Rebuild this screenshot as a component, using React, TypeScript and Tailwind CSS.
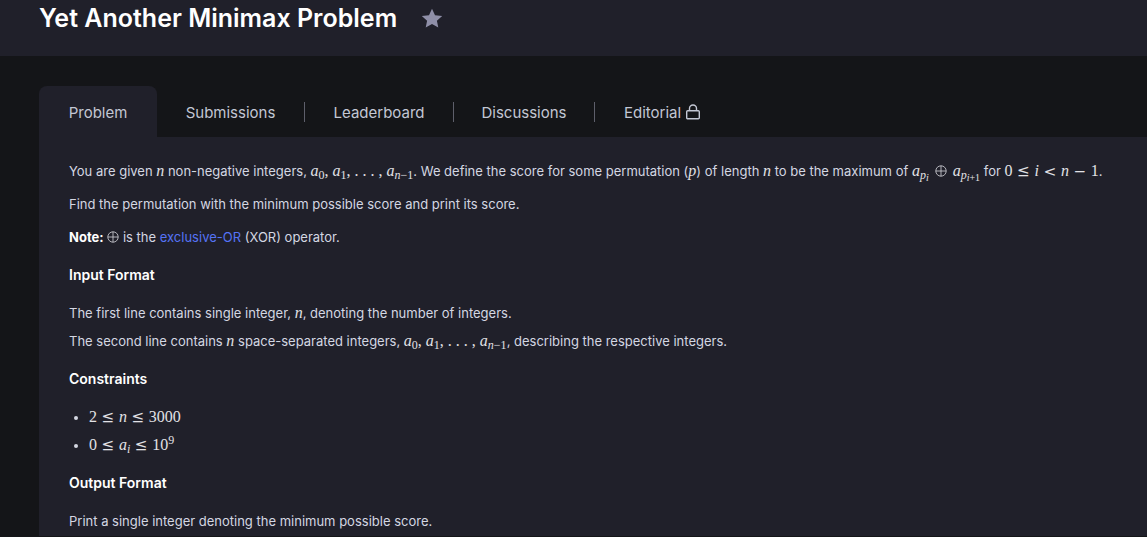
import type { ReactNode } from "react";

function M({ children }: { children: ReactNode }) {
  return (
    <span className="whitespace-nowrap font-['Liberation_Serif',serif] text-[16px] leading-none text-[#e2e2e6]">
      {children}
    </span>
  );
}

function Sub({ children }: { children: ReactNode }) {
  return <sub className="bottom-[-3px] text-[12px] leading-none">{children}</sub>;
}

function Rel({ children }: { children: ReactNode }) {
  return <span className="mx-[5px] font-['DejaVu_Math_TeX_Gyre','DejaVu_Serif',serif] text-[15px]">{children}</span>;
}

function Oplus() {
  return (
    <svg role="img" aria-label="xor" viewBox="0 0 12 12" className="inline-block size-3 align-[-1px]" fill="none" stroke="#d6d6dc" strokeWidth="0.8">
      <circle cx="6" cy="6" r="5.2" />
      <path d="M6 0.8v10.4M0.8 6h10.4" />
    </svg>
  );
}

function Sequence() {
  return (
    <M>
      <i>a</i><Sub>0</Sub>
      <span className="mr-1">,</span>
      <i>a</i><Sub>1</Sub>
      <span className="mr-1">,</span>
      <span className="mr-1">.</span>
      <span className="mr-1">.</span>
      <span className="mr-1">.</span>
      <span className="mr-1">,</span>
      <i>a</i><Sub><i>n</i>−1</Sub>
    </M>
  );
}

function Heading({ children }: { children: ReactNode }) {
  return <h2 className="my-[10px] text-[14px] leading-7 font-semibold text-white">{children}</h2>;
}

const tabs = [
  { label: "Submissions", width: "w-[148px]" },
  { label: "Leaderboard", width: "w-[149px]" },
  { label: "Discussions", width: "w-[141px]" },
];

export default function App() {
  return (
    <div className="min-h-screen bg-[#141518] font-['Inter','Liberation_Sans',sans-serif]">
      <header className="flex h-14 items-start gap-6 bg-[#20202a] px-[39px]">
        <h1 className="text-[25px] leading-9 font-semibold text-white">Yet Another Minimax Problem</h1>
        <button type="button" aria-label="Bookmark" className="mt-2">
          <svg viewBox="0 0 22 20" className="h-5 w-[22px]" fill="#8f8fa8">
            <path d="M11 0.8 14 7.2 21.2 8 15.9 12.7 17.3 19.4 11 16.1 4.7 19.4 6.1 12.7 0.8 8 8 7.2Z" />
          </svg>
        </button>
      </header>

      <main className="pt-[30px] pl-[39px]">
        <nav className="flex h-[51px] items-center text-[15px] leading-5 text-[#c3c7d4]">
          <a href="#problem" aria-current="page" className="flex h-full w-[118px] items-center justify-center rounded-t-lg bg-[#20202a] pt-[3px]">
            Problem
          </a>
          {tabs.map((tab) => (
            <a key={tab.label} href={`#${tab.label.toLowerCase()}`} className={`flex h-5 items-center justify-center border-r border-[#5e5f6b] pt-[3px] ${tab.width}`}>
              {tab.label}
            </a>
          ))}
          <a href="#editorial" className="flex items-center gap-1 pt-[3px] pl-[29px]">
            Editorial
            <svg viewBox="0 0 16 18" className="mb-[3px] h-[18px] w-4" fill="none" stroke="currentColor" strokeWidth="1.4">
              <rect x="1.7" y="7.7" width="12.6" height="8.1" rx="1" />
              <path d="M4.5 7.5V5.5a3.5 3.5 0 0 1 7 0v2" />
            </svg>
          </a>
        </nav>

        <article className="bg-[#20202a] px-[30px] pt-5 pb-px text-[13px] leading-7 text-[#d4d7e2]">
          <p className="mb-[5px]">
            You are given <M><i>n</i></M> non-negative integers, <Sequence />. We define the score for some permutation (<M><i>p</i></M>) of length <M><i>n</i></M> to be the maximum of{" "}
            <M>
              <i>a</i><Sub><i>p<small className="relative top-[2px] text-[10px]">i</small></i></Sub>
              <span className="mx-[6px]"><Oplus /></span>
              <i>a</i><Sub><i>p</i><small className="relative top-[2px] text-[10px]"><i>i</i>+1</small></Sub>
            </M>{" "}
            for <M>0<Rel>≤</Rel><i>i</i><Rel>&lt;</Rel><i>n</i><Rel>−</Rel>1</M>.
          </p>
          <p className="mb-[5px]">Find the permutation with the minimum possible score and print its score.</p>
          <p>
            <strong className="font-bold text-white">Note:</strong> <Oplus /> is the <a href="#xor" className="text-[#5573f5]">exclusive-OR</a> (XOR) operator.
          </p>
          <Heading>Input Format</Heading>
          <p>The first line contains single integer, <M><i>n</i></M>, denoting the number of integers.</p>
          <p>The second line contains <M><i>n</i></M> space-separated integers, <Sequence />, describing the respective integers.</p>
          <Heading>Constraints</Heading>
          <ul className="list-disc pl-5">
            <li><M>2<Rel>≤</Rel><i>n</i><Rel>≤</Rel>3000</M></li>
            <li><M>0<Rel>≤</Rel><i>a</i><Sub><i>i</i></Sub><Rel>≤</Rel>10<sup className="top-[-6px] text-[12px] leading-none">9</sup></M></li>
          </ul>
          <Heading>Output Format</Heading>
          <p>Print a single integer denoting the minimum possible score.</p>
        </article>
      </main>
    </div>
  );
}
